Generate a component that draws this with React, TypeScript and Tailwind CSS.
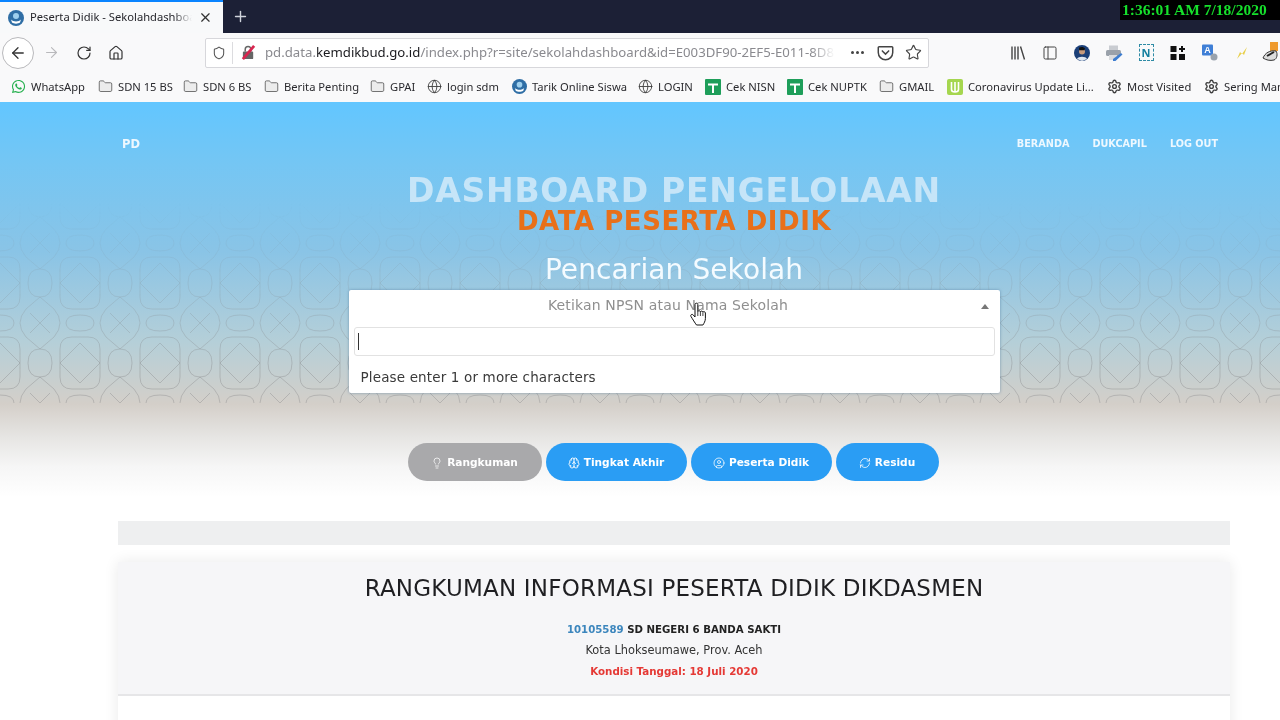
import { ArrowLeft, ArrowRight, RotateCw, Home, Shield, Star, Folder, Globe, Settings, Plus, X, Lightbulb, Brain, CircleUser, RefreshCw, PanelLeft } from "lucide-react";
import { FaWhatsapp } from "react-icons/fa";

const UI = "font-['Noto_Sans','Open_Sans',sans-serif]";
const SITE = "font-['DejaVu_Sans','Inter',sans-serif]";

function Favicon({ size = 16 }: { size?: number }) {
  return (
    <svg width={size} height={size} viewBox="0 0 16 16" className="shrink-0">
      <circle cx="8" cy="8" r="8" fill="#2f6ea5" />
      <circle cx="8" cy="6" r="3" fill="#9fd0ee" />
      <path d="M3 9.5c2 2.5 8 2.5 10 0l-1 3c-2 1.500-6 1.500-8 0z" fill="#fff" />
    </svg>
  );
}

function GreenCross() {
  return (
    <svg width="16" height="16" viewBox="0 0 16 16" className="shrink-0">
      <rect width="16" height="16" rx="1" fill="#1e9e5a" />
      <path d="M3 5.500h10M8 5.500V14" stroke="#fff" strokeWidth="2" />
    </svg>
  );
}

function LimeU() {
  return (
    <svg width="16" height="16" viewBox="0 0 16 16" className="shrink-0">
      <rect width="16" height="16" rx="2" fill="#a5d64f" />
      <path d="M4.500 3v7.500c0 2 2 2.500 3.500 2.500s3.500-.5 3.500-2.500V3M8 3v10" stroke="#fff" strokeWidth="1.600" fill="none" />
    </svg>
  );
}

type Mark = "wa" | "folder" | "globe" | "favicon" | "cross" | "lime" | "gear";

const bookmarks: { label: string; mark: Mark; w: number }[] = [
  { label: "WhatsApp", mark: "wa", w: 87 },
  { label: "SDN 15 BS", mark: "folder", w: 85 },
  { label: "SDN 6 BS", mark: "folder", w: 81 },
  { label: "Berita Penting", mark: "folder", w: 106 },
  { label: "GPAI", mark: "folder", w: 57 },
  { label: "login sdm", mark: "globe", w: 85 },
  { label: "Tarik Online Siswa", mark: "favicon", w: 126 },
  { label: "LOGIN", mark: "globe", w: 67 },
  { label: "Cek NISN", mark: "cross", w: 82 },
  { label: "Cek NUPTK", mark: "cross", w: 92 },
  { label: "GMAIL", mark: "folder", w: 68 },
  { label: "Coronavirus Update Li...", mark: "lime", w: 160 },
  { label: "Most Visited", mark: "gear", w: 97 },
  { label: "Sering Mampir", mark: "gear", w: 110 },
];

function BookmarkMark({ mark }: { mark: Mark }) {
  if (mark === "wa") return <FaWhatsapp size={15} className="shrink-0 text-[#25b04e]" />;
  if (mark === "folder") return <Folder size={15} strokeWidth={1.3} className="shrink-0 text-[#555]" fill="#ececec" />;
  if (mark === "globe") return <Globe size={15} strokeWidth={1.4} className="shrink-0 text-[#3b3b3b]" />;
  if (mark === "favicon") return <Favicon size={15} />;
  if (mark === "cross") return <GreenCross />;
  if (mark === "lime") return <LimeU />;
  return <Settings size={15} strokeWidth={2.2} className="shrink-0 text-[#3f3f3f]" />;
}

function TabBar() {
  return (
    <div className="relative flex h-[33px] items-stretch bg-[#1c2036]">
      <div className="flex w-[223px] items-center gap-[6px] border-t-2 border-[#0a84ff] bg-[#f8f9fa] pl-[8px] pr-[10px]">
        <Favicon />
        <span className="relative w-[164px] overflow-hidden whitespace-nowrap text-[11.200px] text-[#26262c]">
          Peserta Didik - Sekolahdashboard
          <span className="absolute inset-y-0 right-0 w-[18px] bg-gradient-to-r from-transparent to-[#f8f9fa]" />
        </span>
        <X size={15} strokeWidth={2} className="ml-auto text-[#333]" />
      </div>
      <div className="flex w-[34px] items-center justify-center">
        <Plus size={17} strokeWidth={2} className="text-[#d0d3dc]" />
      </div>
      <div className="absolute right-0 top-0 flex h-[20px] w-[160px] items-center bg-black pl-[2px] font-['Liberation_Serif',serif] text-[15.500px] font-bold leading-none text-[#16e02c]">
        1:36:01 AM 7/18/2020
      </div>
    </div>
  );
}

function Pocket() {
  return (
    <svg width="17" height="17" viewBox="0 0 16 16" fill="none" stroke="#444" strokeWidth="1.400">
      <path d="M2 2.500h12a.8.8 0 0 1 .8.8V8A6.800 6.800 0 0 1 1.200 8V3.300a.8.8 0 0 1 .8-.8z" />
      <path d="M5 6.500l3 3 3-3" strokeLinecap="round" />
    </svg>
  );
}

function LockSlash() {
  return (
    <svg width="15" height="15" viewBox="0 0 16 16" className="shrink-0">
      <rect x="2" y="7" width="11" height="8" rx="1" fill="#666" />
      <path d="M4.500 7V4.500a3 3 0 0 1 6 0V7" fill="none" stroke="#666" strokeWidth="1.600" />
      <path d="M2 15L14 1" stroke="#d7264f" strokeWidth="3" />
    </svg>
  );
}

function ExtensionIcons() {
  return (
    <div className="flex h-full items-center">
      <div className="flex w-[32px] shrink-0 justify-center">
        <svg width="16" height="16" viewBox="0 0 16 16" fill="none" stroke="#444" strokeWidth="1.400">
          <path d="M2 1.500v13M5 1.500v13M8 1.500v13M10.500 1.500l4 13" />
        </svg>
      </div>
      <div className="flex w-[32px] shrink-0 justify-center"><PanelLeft size={16} strokeWidth={1.500} className="text-[#444]" /></div>
      <div className="flex w-[32px] shrink-0 justify-center">
        <svg width="16" height="16" viewBox="0 0 16 16">
          <circle cx="8" cy="8" r="8" fill="#1b3f78" />
          <circle cx="8" cy="6.500" r="3" fill="#c79a7c" />
          <path d="M5 2.800c2-1.500 5-1 6 .8l-.5 1.700H5.200z" fill="#111" />
          <path d="M3 14c1-3 9-3 10 0l-5 2z" fill="#dfe6ef" />
        </svg>
      </div>
      <div className="flex w-[32px] shrink-0 justify-center">
        <svg width="18" height="18" viewBox="0 0 18 18">
          <rect x="4" y="1.500" width="9" height="5" fill="#c9ccd1" />
          <rect x="1" y="6" width="15" height="6" rx="1.500" fill="#9aa1aa" />
          <rect x="4" y="11" width="8" height="5" fill="#d9dbde" />
          <path d="M8 15l8-6 1.500 1.500-7 6.500H8z" fill="#3d7dd0" />
        </svg>
      </div>
      <div className="flex w-[32px] shrink-0 justify-center">
        <div className="flex h-[17px] w-[15px] items-center justify-center border border-dashed border-[#2e8ba5] text-[11px] font-bold leading-none text-[#167f9f]">N</div>
      </div>
      <div className="flex w-[32px] shrink-0 justify-center">
        <svg width="16" height="16" viewBox="0 0 16 16" fill="#111">
          <rect x="0.500" y="1" width="6" height="6" />
          <rect x="0.500" y="9" width="6" height="6" />
          <rect x="9" y="9" width="6" height="6" />
          <path d="M11 1h2v2h2v2h-2v2h-2V5H9V3h2z" />
        </svg>
      </div>
      <div className="flex w-[32px] shrink-0 justify-center">
        <svg width="18" height="18" viewBox="0 0 18 18">
          <rect x="1" y="0.500" width="11" height="11" rx="1" fill="#3f7fd6" />
          <text x="6.500" y="9" textAnchor="middle" fontSize="9" fontWeight="700" fill="#fff" fontFamily="Liberation Sans">A</text>
          <circle cx="13" cy="13" r="3.500" fill="#9aa3ad" />
        </svg>
      </div>
      <div className="flex w-[32px] shrink-0 justify-center">
        <svg width="14" height="14" viewBox="0 0 14 14"><path d="M2 13L5 6l2 2 5-7-3 8-2-2z" fill="#e8cf4a" /></svg>
      </div>
      <div className="flex w-[32px] shrink-0 justify-start pl-[4px]">
        <svg width="24" height="22" viewBox="0 0 24 22" className="shrink-0">
          <rect x="8" y="0" width="8" height="9" fill="#ef9a2e" />
          <path d="M1 16c2-5 7-8 13-7 2 3 1 8-2 9-4 1-8 0-11-2z" fill="#dcdcdc" stroke="#333" />
          <path d="M5 14l7-4" stroke="#222" strokeWidth="2" />
        </svg>
      </div>
    </div>
  );
}

function Toolbar() {
  return (
    <div className="flex h-[39px] items-center overflow-hidden bg-[#f9f9fa]">
      <div className="ml-[2px] flex h-[32px] w-[32px] shrink-0 items-center justify-center rounded-full border border-[#b9b9bc] bg-white">
        <ArrowLeft size={18} strokeWidth={1.700} className="text-[#333]" />
      </div>
      <div className="flex w-[34px] shrink-0 justify-center"><ArrowRight size={17} strokeWidth={1.500} className="text-[#b9b9bc]" /></div>
      <div className="flex w-[32px] shrink-0 justify-center"><RotateCw size={16} strokeWidth={1.800} className="text-[#333]" /></div>
      <div className="flex w-[31px] shrink-0 justify-center"><Home size={16} strokeWidth={1.800} className="text-[#333]" /></div>
      <div className="ml-[74px] flex h-[30px] w-[724px] shrink-0 items-center rounded-[2px] border border-[#d7d7db] bg-white">
        <div className="flex h-[22px] w-[27px] shrink-0 items-center justify-center border-r border-[#dcdcdf]">
          <Shield size={14} strokeWidth={1.800} className="text-[#555]" />
        </div>
        <div className="ml-[8px] shrink-0"><LockSlash /></div>
        <div className="relative ml-[9px] w-[570px] shrink-0 overflow-hidden whitespace-nowrap text-[13.200px] text-[#8a8a8f]">
          pd.data.<span className="text-[#1b1b1f]">kemdikbud.go.id</span>/index.php?r=site/sekolahdashboard&amp;id=E003DF90-2EF5-E011-8D8
          <span className="absolute inset-y-0 right-0 w-[24px] bg-gradient-to-r from-transparent to-white" />
        </div>
        <div className="ml-[14px] flex w-[16px] shrink-0 justify-center gap-[2px]">
          <span className="h-[3px] w-[3px] rounded-full bg-[#444]" />
          <span className="h-[3px] w-[3px] rounded-full bg-[#444]" />
          <span className="h-[3px] w-[3px] rounded-full bg-[#444]" />
        </div>
        <div className="ml-[12px] shrink-0"><Pocket /></div>
        <Star size={17} strokeWidth={1.600} className="ml-[11px] shrink-0 text-[#444]" />
      </div>
      <div className="ml-[73px] h-full shrink-0"><ExtensionIcons /></div>
    </div>
  );
}

function Bookmarks() {
  return (
    <div className="flex h-[30px] items-center overflow-hidden bg-[#f9f9fa] pl-[11px]">
      {bookmarks.map((b) => (
        <div key={b.label} className="flex shrink-0 items-center gap-[5px] text-[11.200px] text-[#2a2a2e]" style={{ width: b.w }}>
          <BookmarkMark mark={b.mark} />
          <span className="whitespace-nowrap">{b.label}</span>
        </div>
      ))}
    </div>
  );
}

function Pattern() {
  return (
    <svg className="absolute inset-x-0 top-[100px] h-[201px] w-full [mask-image:linear-gradient(to_bottom,transparent,rgba(0,0,0,0.5)_45%,black_85%)]">
      <defs>
        <pattern id="girih" width="80" height="80" patternUnits="userSpaceOnUse" y="1">
          <g fill="none" stroke="#7d7f80" strokeOpacity="0.34" strokeWidth="1">
            <path d="M0 20L20 0M60 0L80 20M0 60L20 80M60 80L80 60" />
            <path d="M20 0V14Q20 26 8 26H0M60 0V14Q60 26 72 26H80M20 80V66Q20 54 8 54H0M60 80V66Q60 54 72 54H80" />
            <path d="M40 14L54 26Q66 40 54 54L40 66L26 54Q14 40 26 26Z" />
            <path d="M28 0Q28 14 40 14Q52 14 52 0M28 80Q28 66 40 66Q52 66 52 80" />
            <path d="M0 32Q14 32 14 40Q14 48 0 48M80 32Q66 32 66 40Q66 48 80 48" />
            <path d="M30 30L50 50M50 30L30 50" />
          </g>
        </pattern>
      </defs>
      <rect width="100%" height="100%" fill="url(#girih)" />
    </svg>
  );
}

const pill = "flex h-[38px] items-center justify-center gap-[4px] rounded-full pt-[1px] text-[10.600px] font-bold text-white";

function Buttons() {
  return (
    <div className="mt-[50px] flex justify-center gap-[4px] pr-[2px]">
      <div className={`${pill} w-[134px] bg-[#a9a9ab] text-[#f3f3f3]`}><Lightbulb size={12} strokeWidth={1.500} />Rangkuman</div>
      <div className={`${pill} w-[141px] bg-[#2a9df4]`}><Brain size={12} strokeWidth={1.800} />Tingkat Akhir</div>
      <div className={`${pill} w-[141px] bg-[#2a9df4]`}><CircleUser size={12} strokeWidth={1.500} />Peserta Didik</div>
      <div className={`${pill} w-[103px] bg-[#2a9df4]`}><RefreshCw size={12} strokeWidth={1.500} />Residu</div>
    </div>
  );
}

function Cursor() {
  return (
    <svg width="20" height="24" viewBox="0 0 20 24" className="absolute left-[340px] top-[12px]">
      <path d="M6 2.500c0-1.800 2.800-1.800 2.800 0v7c0-1 2.600-1 2.600.3 0-1 2.500-1 2.500.4 0-.9 2.500-.7 2.500.8v5.500c0 2.500-1.500 5-2.500 6.500H7.500C6 21 3.500 17 2 14.500c-1-1.500 1-3 2.300-1.500L6 15z" fill="#fff" stroke="#111" strokeWidth="1" strokeLinejoin="round" />
      <path d="M8.800 9.500V14M11.400 10v4M13.900 10.500V14" stroke="#111" strokeWidth=".8" />
    </svg>
  );
}

function SelectBox() {
  return (
    <div className="relative mx-auto mt-[2px] h-[103px] w-[651px] rounded-[2px] bg-white shadow-[0_0_3px_rgba(70,110,150,0.6)]">
      <div className="relative flex h-[31px] items-center justify-center pr-[12px] text-[14px] tracking-[0.15px] text-[#8f8f8f]">
        Ketikan NPSN atau Nama Sekolah
        <span className="absolute right-[11px] top-[14px] h-0 w-0 border-x-[4px] border-b-[5px] border-x-transparent border-b-[#777]" />
      </div>
      <div className="mx-[5px] mt-[6px] flex h-[29px] items-center rounded-[3px] border border-[#e2e2e2] bg-white pl-[3px]">
        <span className="h-[17px] w-px bg-[#333]" />
      </div>
      <div className="mt-[11px] pl-[12px] text-[13.500px] leading-[20px] tracking-[0.15px] text-[#3a3a3a]">Please enter 1 or more characters</div>
      <Cursor />
    </div>
  );
}

function Hero() {
  return (
    <section className="relative h-[419px] bg-[linear-gradient(to_bottom,#62c6ff_0px,#74c6f4_60px,#8ac4e6_150px,#b5cfd8_240px,#d4cfc9_302px,#e6e5e3_335px,#f6f6f6_365px,#ffffff_395px)]">
      <Pattern />
      <div className="relative ml-[118px] w-[1112px]">
        <nav className="flex h-[66px] items-center justify-between pl-[4px] pr-[12px] pt-[18px] text-[9.700px] font-bold text-[#eef8ff]">
          <span className="pt-[1px] text-[11.500px]">PD</span>
          <div className="flex gap-[23px]">
            <span>BERANDA</span>
            <span>DUKCAPIL</span>
            <span>LOG OUT</span>
          </div>
        </nav>
        <h1 className="mt-[8px] text-center text-[33px] font-bold leading-[30px] tracking-[0.75px] text-[#c6e5f8]">DASHBOARD PENGELOLAAN</h1>
        <h2 className="pt-[1px] text-center text-[26px] font-bold leading-[28px] tracking-[0.55px] text-[#e8701a]">DATA PESERTA DIDIK</h2>
        <h3 className="mt-[17px] text-center text-[28px] leading-[36px] tracking-[0.1px] text-[#f4fbff]">Pencarian Sekolah</h3>
        <SelectBox />
        <Buttons />
      </div>
    </section>
  );
}

function Summary() {
  return (
    <section className="ml-[118px] w-[1112px]">
      <div className="h-[24px] bg-[#eeeff0]" />
      <div className="mt-[17px] shadow-[0_0_14px_rgba(0,0,0,0.09)]">
        <div className="flex h-[134px] flex-col items-center border-b-2 border-[#e6e6e8] bg-[#f6f6f8]">
          <h4 className="mt-[11px] text-[23px] leading-[30px] tracking-[0.2px] text-[#1f1f22]">RANGKUMAN INFORMASI PESERTA DIDIK DIKDASMEN</h4>
          <p className="mt-[16px] text-[10.200px] font-bold leading-[21px] text-[#222]"><span className="text-[#3c86bd]">10105589</span> SD NEGERI 6 BANDA SAKTI</p>
          <p className="text-[11.400px] leading-[21px] text-[#333]">Kota Lhokseumawe, Prov. Aceh</p>
          <p className="text-[10.300px] font-bold leading-[21px] text-[#e53935]">Kondisi Tanggal: 18 Juli 2020</p>
        </div>
        <div className="h-[60px] bg-white" />
      </div>
    </section>
  );
}

export default function App() {
  return (
    <div className="h-[720px] w-[1280px] overflow-hidden bg-white blur-[0.4px]">
      <header className={UI}>
        <TabBar />
        <Toolbar />
        <Bookmarks />
      </header>
      <main className={SITE}>
        <Hero />
        <Summary />
      </main>
    </div>
  );
}
